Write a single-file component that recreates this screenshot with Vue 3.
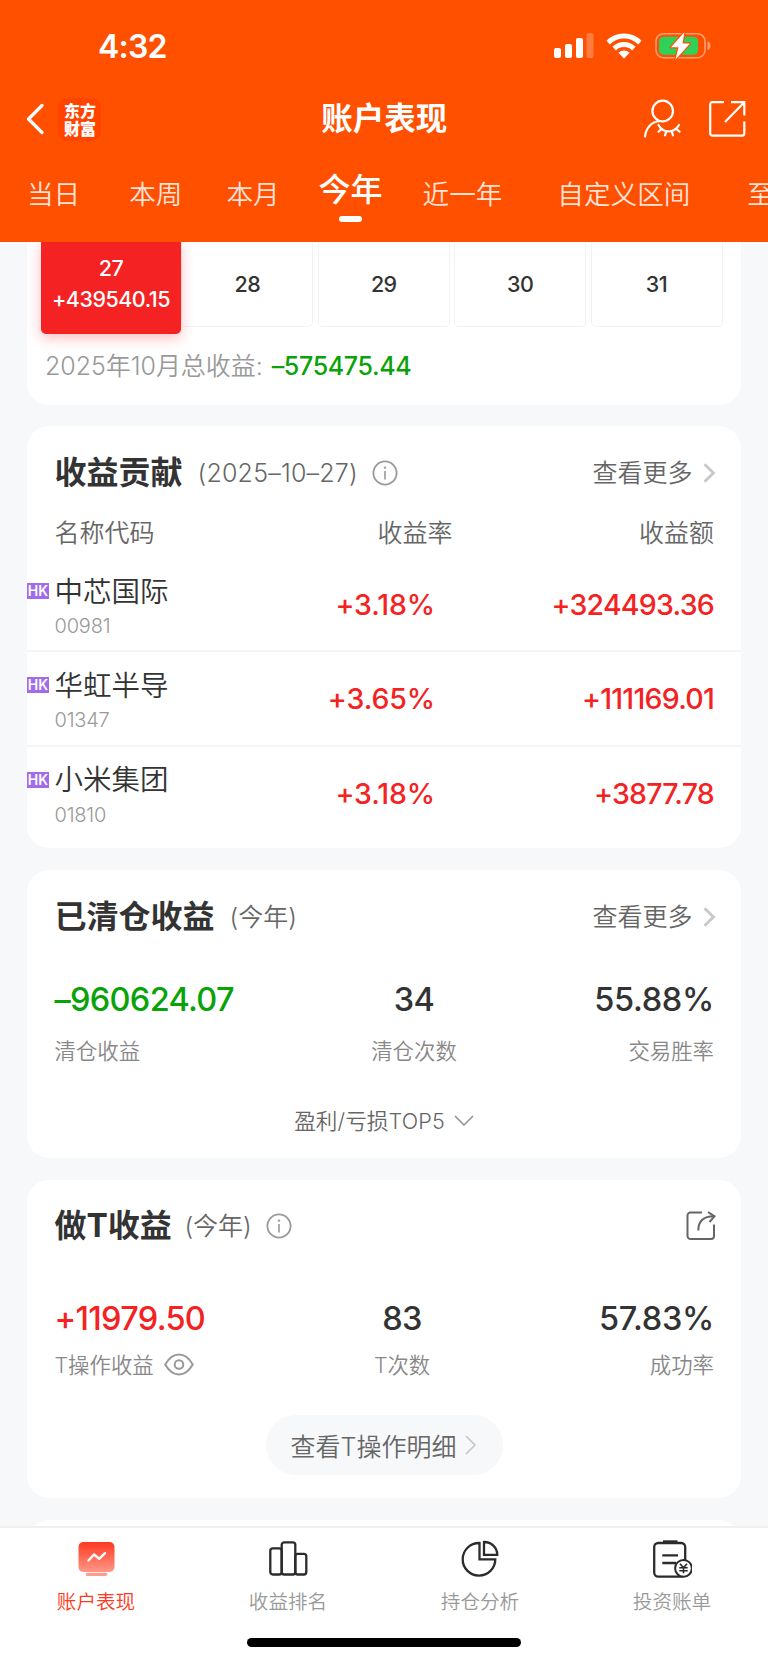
<script setup>
import { ref } from "vue";

const tabs = ["当日", "本周", "本月", "今年", "近一年", "自定义区间", "至今"];
const activeTab = ref("今年");

const days = [
  { day: 27, profit: "+439540.15" },
  { day: 28 },
  { day: 29 },
  { day: 30 },
  { day: 31 },
];

const stocks = [
  { name: "中芯国际", code: "00981", rate: "+3.18%", amount: "+324493.36" },
  { name: "华虹半导", code: "01347", rate: "+3.65%", amount: "+111169.01" },
  { name: "小米集团", code: "01810", rate: "+3.18%", amount: "+3877.78" },
];

const navs = [
  { key: "account", label: "账户表现" },
  { key: "rank", label: "收益排名" },
  { key: "position", label: "持仓分析" },
  { key: "bill", label: "投资账单" },
];
const activeNav = ref("account");
</script>

<template>
  <div class="page">
    <header class="header">
      <div class="status-bar">
        <span class="time">4:32</span>
        <div class="status-icons">
          <svg class="signal" width="40" height="26" viewBox="0 0 40 26">
            <rect x="0" y="15" width="7" height="10" rx="2" fill="#fff" />
            <rect x="11" y="11" width="7" height="14" rx="2" fill="#fff" />
            <rect x="22" y="5" width="7" height="20" rx="2" fill="#fff" />
            <rect x="32.5" y="0" width="7" height="25" rx="2" fill="#fff" fill-opacity="0.25" />
          </svg>
          <svg class="wifi" width="36" height="26" viewBox="0 0 36 26">
            <g fill="none" stroke="#fff" stroke-width="5">
              <path d="M2.2 9.6 A22.5 22.5 0 0 1 33.8 9.6" />
              <path d="M8.2 15.6 A14 14 0 0 1 27.8 15.6" />
            </g>
            <path d="M18 25.5 L12.4 19.8 A8.2 8.2 0 0 1 23.6 19.8 Z" fill="#fff" />
          </svg>
          <svg class="battery" width="58" height="28" viewBox="0 0 58 28">
            <rect x="1" y="1.7" width="49" height="24" rx="7.5" fill="none" stroke="#fff" stroke-opacity="0.45" stroke-width="1.6" />
            <path d="M52.5 9.5 C56.5 10.5 56.5 17 52.5 18 Z" fill="#fff" fill-opacity="0.45" />
            <rect x="4" y="4.7" width="39" height="18" rx="4.5" fill="#30d158" />
            <path d="M29.5 0 L16 15.3 H23.5 L20.5 27.5 L35 11.5 H27.5 Z" fill="#fff" stroke="#ff5000" stroke-width="2.4" stroke-linejoin="round" paint-order="stroke" />
          </svg>
        </div>
      </div>
      <div class="nav-bar">
        <svg class="back" width="18" height="32" viewBox="0 0 18 32">
          <path d="M16 2.5 L2.5 16 L16 29.5" fill="none" stroke="#fff" stroke-width="3.2" stroke-linecap="round" stroke-linejoin="round" />
        </svg>
        <div class="logo">东方财富</div>
        <h1 class="title">账户表现</h1>
        <svg class="user" width="38" height="40" viewBox="0 0 38 40" fill="none" stroke="#fff" stroke-width="2.2" stroke-linecap="round">
          <circle cx="19.7" cy="12" r="10.3" />
          <path d="M2 37.5 C3 29 8.5 22.5 17 22" />
          <path d="M15.5 26 C20 34.5 31 34.5 36 26" />
          <path d="M18.5 30 L15.5 32.7 M23.3 32.5 L22 36.3 M28.7 32.5 L30 36.3 M33.3 30 L36.5 32.7" />
        </svg>
        <svg class="open" width="38" height="38" viewBox="0 0 38 38" fill="none" stroke="#fff" stroke-width="2.2">
          <path d="M16 2.2 H4.2 A2 2 0 0 0 2.2 4.2 V33.6 A2 2 0 0 0 4.2 35.6 H34.3 A2 2 0 0 0 36.3 33.6 V21.5" />
          <path d="M23 2.2 H36.3 V15.5 M36 2.5 L17 22" />
        </svg>
      </div>
      <nav class="tabs">
        <span v-for="t in tabs" :key="t" class="tab" :class="{ active: t === activeTab }" @click="activeTab = t">{{ t }}</span>
      </nav>
    </header>

    <main class="content">
      <section class="card calendar">
        <div class="days">
          <div v-for="d in days" :key="d.day" class="day" :class="{ selected: d.profit }">
            <span>{{ d.day }}</span>
            <span v-if="d.profit">{{ d.profit }}</span>
          </div>
        </div>
        <div class="total">
          <span class="total-label">2025年10月总收益:</span>
          <span class="total-value down">–575475.44</span>
        </div>
      </section>

      <section class="card contribution">
        <div class="card-head">
          <h2>收益贡献</h2>
          <span class="sub date">(2025–10–27)</span>
          <svg class="info" width="26" height="26" viewBox="0 0 26 26">
            <circle cx="13" cy="13" r="11.6" fill="none" stroke="#999" stroke-width="1.8" />
            <path d="M13 11 V19.5" stroke="#999" stroke-width="1.6" />
            <circle cx="13" cy="7.6" r="1.2" fill="#999" />
          </svg>
          <a class="more">查看更多
            <svg width="13" height="20" viewBox="0 0 13 20">
              <path d="M1.5 1.2 L10.5 10 L1.5 18.8" fill="none" stroke="#c8c8c8" stroke-width="2.8" />
            </svg>
          </a>
        </div>
        <div class="table-head">
          <span>名称代码</span>
          <span>收益率</span>
          <span>收益额</span>
        </div>
        <div v-for="s in stocks" :key="s.code" class="stock">
          <span class="market">HK</span>
          <div class="stock-info">
            <div class="stock-name">{{ s.name }}</div>
            <div class="stock-code">{{ s.code }}</div>
          </div>
          <span class="stock-rate up">{{ s.rate }}</span>
          <span class="stock-amount up">{{ s.amount }}</span>
        </div>
      </section>

      <section class="card cleared">
        <div class="card-head">
          <h2>已清仓收益</h2>
          <span class="sub">(今年)</span>
          <a class="more">查看更多
            <svg width="13" height="20" viewBox="0 0 13 20">
              <path d="M1.5 1.2 L10.5 10 L1.5 18.8" fill="none" stroke="#c8c8c8" stroke-width="2.8" />
            </svg>
          </a>
        </div>
        <div class="stats">
          <div class="stat">
            <span class="num down">–960624.07</span>
            <span class="label">清仓收益</span>
          </div>
          <div class="stat center">
            <span class="num">34</span>
            <span class="label">清仓次数</span>
          </div>
          <div class="stat right">
            <span class="num">55.88%</span>
            <span class="label">交易胜率</span>
          </div>
        </div>
        <div class="expand">
          盈利/亏损TOP5
          <svg width="20" height="12" viewBox="0 0 20 12">
            <path d="M1 1 L10 10 L19 1" fill="none" stroke="#888" stroke-width="1.4" />
          </svg>
        </div>
      </section>

      <section class="card t-profit">
        <div class="card-head">
          <h2>做T收益</h2>
          <span class="sub">(今年)</span>
          <svg class="info" width="26" height="26" viewBox="0 0 26 26">
            <circle cx="13" cy="13" r="11.6" fill="none" stroke="#999" stroke-width="1.8" />
            <path d="M13 11 V19.5" stroke="#999" stroke-width="1.6" />
            <circle cx="13" cy="7.6" r="1.2" fill="#999" />
          </svg>
          <svg class="share" width="30" height="30" viewBox="0 0 30 30" fill="none" stroke="#666" stroke-width="2">
            <path d="M16 1.5 H4.5 A3 3 0 0 0 1.5 4.5 V25 A3 3 0 0 0 4.5 28 H25 A3 3 0 0 0 28 25 V13.5" />
            <path d="M12.3 19.5 C12.3 10 17 5.3 28 5.3" />
            <path d="M22 1 L28.5 5.3 L23.5 11" />
          </svg>
        </div>
        <div class="stats">
          <div class="stat">
            <span class="num up">+11979.50</span>
            <span class="label">T操作收益
              <svg width="30" height="23" viewBox="0 0 30 23" fill="none" stroke="#999" stroke-width="2">
                <path d="M1.2 11.5 C9 -1.8 21 -1.8 28.8 11.5 C21 24.8 9 24.8 1.2 11.5 Z" stroke-linejoin="round" />
                <circle cx="15" cy="11.5" r="4.3" />
              </svg>
            </span>
          </div>
          <div class="stat center">
            <span class="num">83</span>
            <span class="label">T次数</span>
          </div>
          <div class="stat right">
            <span class="num">57.83%</span>
            <span class="label">成功率</span>
          </div>
        </div>
        <button class="detail-btn">查看T操作明细
          <svg width="12" height="20" viewBox="0 0 12 20">
            <path d="M1 1 L10 10 L1 19" fill="none" stroke="#c4c4c4" stroke-width="1.5" />
          </svg>
        </button>
      </section>

      <section class="card next"></section>
    </main>

    <footer class="footer">
      <div class="navs">
        <div v-for="n in navs" :key="n.key" class="nav" :class="{ active: n.key === activeNav }" @click="activeNav = n.key">
          <svg width="40" height="40" viewBox="0 0 40 40" fill="none" stroke="#2b2b2b" stroke-width="2.3">
            <template v-if="n.key === 'account'">
              <defs>
                <linearGradient id="screen" x1="0" y1="0" x2="0" y2="1">
                  <stop offset="0" stop-color="#ff3820" />
                  <stop offset="1" stop-color="#ff9888" />
                </linearGradient>
              </defs>
              <rect x="2.5" y="2" width="36" height="30" rx="5" fill="url(#screen)" stroke="none" />
              <rect x="9.8" y="32.8" width="21.5" height="3.2" rx="1.6" fill="#ff9c8e" stroke="none" />
              <path d="M12.5 20.5 L18 14.5 L23.2 18.8 L29 13.2" stroke="#fff" stroke-width="2.4" stroke-linecap="round" stroke-linejoin="round" />
            </template>
            <template v-else-if="n.key === 'rank'">
              <rect x="2.3" y="8.3" width="11.4" height="26.2" rx="2.5" />
              <rect x="13.7" y="2.3" width="13.6" height="32.2" rx="2.5" />
              <rect x="27.3" y="13.8" width="11" height="20.7" rx="2.5" />
            </template>
            <template v-else-if="n.key === 'position'">
              <path d="M19.5 3 A16.3 16.3 0 1 0 35.3 19.3 H19.5 Z" />
              <path d="M24 2 A13 13 0 0 1 37.3 14.8 H24 Z" />
            </template>
            <template v-else>
              <rect x="2.2" y="3" width="31" height="33.6" rx="4" />
              <path d="M11 1.8 H25.5" stroke-width="3" />
              <path d="M10.3 15.3 H26 M10.3 23 H24" />
              <circle cx="31.5" cy="28.3" r="8.4" fill="#fff" stroke-width="2" />
              <path d="M28 23.8 L31.5 27.8 L35 23.8 M31.5 27.8 V33.3 M27.3 27.8 H35.7 M27.3 30.7 H35.7" stroke-width="1.6" />
            </template>
          </svg>
          <span>{{ n.label }}</span>
        </div>
      </div>
      <div class="home-indicator"></div>
    </footer>
  </div>
</template>

<style>
body {
  margin: 0;
  background: #f7f8fa;
}
</style>

<style scoped>
.page {
  display: flex;
  flex-direction: column;
  width: 768px;
  height: 1662px;
  overflow: hidden;
  background: #f7f8fa;
  color: #333;
  font-family: Inter, "Noto Sans CJK SC", sans-serif;
  font-weight: 350;
}
svg {
  flex: none;
  display: block;
}
h1,
h2 {
  margin: 0;
}
.up {
  color: #f42222;
}
.down {
  color: #09a309;
}

/* header */
.header {
  flex: none;
  height: 242px;
  box-sizing: border-box;
  background: #ff5000;
  color: #fff;
  overflow: hidden;
}
.status-bar {
  display: flex;
  justify-content: space-between;
  align-items: center;
  height: 92px;
  padding: 0 55.5px 0 98px;
}
.time {
  font-size: 32px;
  font-weight: 600;
  letter-spacing: -0.8px;
}
.status-icons {
  display: flex;
  align-items: center;
}
.wifi {
  margin-left: 12px;
}
.battery {
  margin-left: 13px;
}
.nav-bar {
  display: flex;
  align-items: center;
  height: 54px;
  padding: 0 22.5px 0 26px;
}
.logo {
  box-sizing: border-box;
  width: 43px;
  height: 43px;
  margin-left: 14px;
  padding: 3px 5px 4px 6px;
  border-radius: 9px;
  background: #ff4400;
  font-family: "Noto Sans CJK SC", sans-serif;
  font-size: 16px;
  font-weight: 900;
  line-height: 18px;
}
.title {
  flex: 1;
  padding-left: 25px;
  text-align: center;
  font-size: 31.5px;
  font-weight: 700;
  line-height: 54px;
}
.open {
  margin-left: 27px;
}
.tabs {
  display: flex;
  align-items: center;
  height: 96px;
  padding-left: 27px;
  white-space: nowrap;
}
.tab {
  flex: none;
  font-size: 26.6px;
  line-height: 40px;
  color: rgba(255, 255, 255, 0.85);
}
.tab:nth-child(2) {
  margin-left: 49px;
}
.tab:nth-child(3) {
  margin-left: 44px;
}
.tab:nth-child(4) {
  margin-left: 39px;
}
.tab:nth-child(5) {
  margin-left: 40px;
}
.tab:nth-child(6) {
  margin-left: 55px;
}
.tab:nth-child(7) {
  margin-left: 57px;
}
.tab.active {
  display: flex;
  flex-direction: column;
  align-items: center;
  padding-top: 4px;
  color: #fff;
  font-size: 32px;
  font-weight: 500;
}
.tab.active::after {
  content: "";
  width: 23px;
  height: 5.5px;
  margin-top: 6px;
  border-radius: 3px;
  background: #fff;
}

/* cards */
.content {
  flex: 1;
  min-height: 0;
  padding: 0 27px;
  overflow: hidden;
}
.card {
  box-sizing: border-box;
  margin-bottom: 21.5px;
  border-radius: 22px;
  background: #fff;
}
.card-head {
  display: flex;
  align-items: center;
  height: 40px;
  padding: 0 25.5px 0 27.5px;
}
.card-head h2 {
  font-size: 32px;
  font-weight: 700;
  line-height: 40px;
  white-space: nowrap;
}
.sub {
  margin-left: 15px;
  font-size: 25px;
  line-height: 40px;
  color: #666;
}
.date {
  letter-spacing: 0.2px;
}
.info {
  margin-left: 14px;
}
.more {
  display: flex;
  align-items: center;
  gap: 10px;
  margin-left: auto;
  font-size: 25px;
  line-height: 40px;
  color: #666;
}

.calendar {
  height: 162.5px;
  padding: 0 18px;
  border-radius: 0 0 22px 22px;
}
.days {
  display: grid;
  grid-template-columns: repeat(5, 132px);
  column-gap: 4.4px;
}
.day {
  display: flex;
  flex-direction: column;
  align-items: center;
  justify-content: center;
  box-sizing: border-box;
  height: 85px;
  border: 1px solid #f3f3f3;
  border-top: none;
  border-radius: 0 0 5px 5px;
  font-size: 21.5px;
  font-weight: 500;
  line-height: 31px;
  letter-spacing: -0.5px;
}
.day.selected {
  z-index: 1;
  height: 92px;
  margin: 0 -4px;
  padding-bottom: 8px;
  border: none;
  background: #f42222;
  box-shadow: 0 4px 14px rgba(244, 34, 34, 0.3);
  color: #fff;
}
.total {
  display: flex;
  align-items: center;
  margin-top: 12px;
  font-size: 25px;
  line-height: 40px;
  white-space: nowrap;
}
.total-label {
  color: #999;
  letter-spacing: -0.05px;
}
.total-value {
  margin-left: 9px;
  font-weight: 500;
  letter-spacing: -0.35px;
}

.contribution {
  height: 422px;
  padding-top: 26.5px;
}
.table-head {
  display: grid;
  grid-template-columns: 200px 198px 1fr;
  height: 65.5px;
  padding: 0 27px 0 27.5px;
  font-size: 25px;
  line-height: 81px;
  color: #666;
}
.table-head span:not(:first-child) {
  text-align: right;
}
.stock {
  display: grid;
  grid-template-columns: 22px 1fr 200px 279px;
  box-sizing: border-box;
  height: 94.3px;
  padding-right: 27px;
  border-bottom: 2px solid #f4f4f4;
}
.stock:last-child {
  border-bottom: none;
}
.market {
  height: 16px;
  margin-top: 25px;
  background: #a26bea;
  color: #fff;
  font-size: 14px;
  font-weight: 600;
  line-height: 16px;
  text-align: center;
}
.stock-info {
  padding-left: 5.5px;
}
.stock-name {
  margin-top: 15.5px;
  font-size: 28.5px;
  line-height: 36px;
}
.stock-code {
  margin-top: 4.5px;
  font-size: 20px;
  line-height: 24px;
  color: #999;
  letter-spacing: -0.2px;
}
.stock-rate,
.stock-amount {
  font-size: 28.5px;
  font-weight: 500;
  line-height: 94px;
  text-align: right;
}
.stock-amount {
  letter-spacing: -0.75px;
}
.stock-rate {
  letter-spacing: -0.1px;
}

.cleared {
  height: 288.7px;
  padding-top: 27px;
}
.stats {
  display: flex;
  justify-content: space-between;
  padding: 0 27px 0 27.5px;
}
.stat {
  display: flex;
  flex-direction: column;
}
.stat.center {
  align-items: center;
}
.stat.right {
  align-items: flex-end;
}
.num {
  font-size: 32.5px;
  font-weight: 500;
  line-height: 40px;
  letter-spacing: -0.7px;
}
.stat.right .num {
  letter-spacing: -0.3px;
}
.label {
  display: flex;
  align-items: center;
  gap: 10px;
  font-size: 21.4px;
  line-height: 30px;
  color: #888;
}
.cleared .stats {
  margin-top: 43.5px;
}
.cleared .label {
  margin-top: 15.5px;
}
.expand {
  display: flex;
  justify-content: center;
  align-items: center;
  gap: 9px;
  margin-top: 40px;
  font-size: 21.6px;
  line-height: 30px;
  color: #666;
  letter-spacing: 0.1px;
}

.t-profit {
  height: 318.6px;
  padding-top: 26px;
}
.t-profit .sub {
  margin-left: 12.5px;
}
.share {
  margin-left: auto;
}
.t-profit .stats {
  margin-top: 53px;
}
.t-profit .label {
  margin-top: 11px;
}
.detail-btn {
  display: flex;
  align-items: center;
  justify-content: center;
  gap: 9px;
  width: 237px;
  height: 60px;
  margin: 35.5px auto 0;
  padding: 0;
  border: none;
  border-radius: 30px;
  background: #f7f8fa;
  color: #666;
  font-family: inherit;
  font-size: 25px;
  font-weight: 350;
}
.next {
  height: 60px;
  margin-bottom: 0;
}

/* bottom bar */
.footer {
  flex: none;
  height: 136px;
  box-sizing: border-box;
  border-top: 2px solid #f0f0f0;
  background: #fff;
}
.navs {
  display: grid;
  grid-template-columns: repeat(4, 1fr);
  height: 110px;
}
.nav {
  display: flex;
  flex-direction: column;
  align-items: center;
  padding-top: 12px;
  color: #999;
  font-size: 19.6px;
  line-height: 28px;
}
.nav span {
  margin-top: 8px;
}
.nav.active {
  color: #ff3820;
}
.home-indicator {
  width: 274px;
  height: 9px;
  margin: 0 auto;
  border-radius: 5px;
  background: #000;
}
</style>
